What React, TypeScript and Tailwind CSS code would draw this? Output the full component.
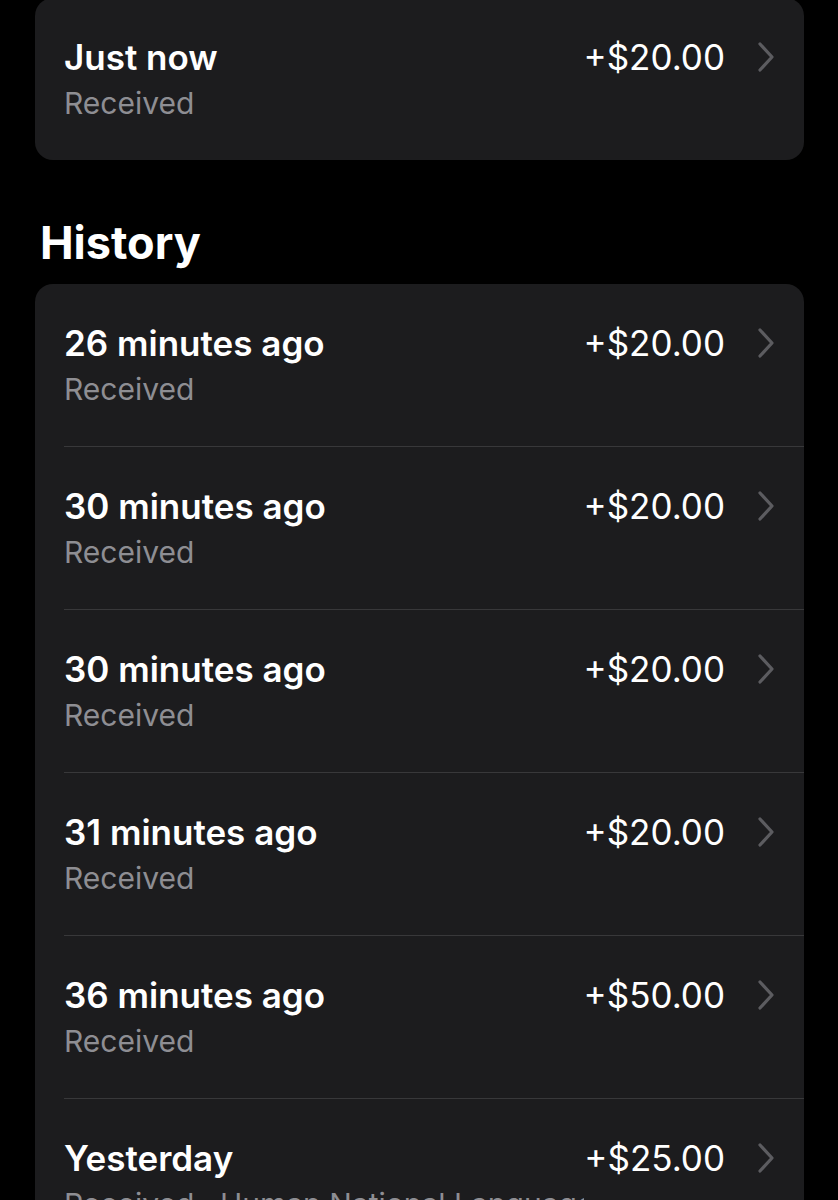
import React from "react";

type Tx = { when: string; amount: string; note: string };

const history: Tx[] = [
  { when: "26 minutes ago", amount: "+$20.00", note: "Received" },
  { when: "30 minutes ago", amount: "+$20.00", note: "Received" },
  { when: "30 minutes ago", amount: "+$20.00", note: "Received" },
  { when: "31 minutes ago", amount: "+$20.00", note: "Received" },
  { when: "36 minutes ago", amount: "+$50.00", note: "Received" },
  { when: "Yesterday", amount: "+$25.00", note: "Received · Human National Language & Dance" },
];

function Chevron() {
  return (
    <svg width="18" height="32" viewBox="0 0 18 32" fill="none" className="shrink-0">
      <path d="M3 3 L15 16 L3 29" stroke="#5c5c60" strokeWidth="3.2" strokeLinecap="round" strokeLinejoin="round" />
    </svg>
  );
}

function Row({ tx, last }: { tx: Tx; last?: boolean }) {
  return (
    <div className="pl-[29px]">
      <div className={`flex items-start pr-[29px] py-[35px] ${last ? "" : "border-b border-[#38383a]"}`}>
        <div className="flex-1 min-w-0">
          <div className="text-[35px] leading-[48px] font-semibold text-white">{tx.when}</div>
          <div className="text-[30px] leading-[44px] text-[#8e8e93] whitespace-nowrap overflow-hidden">{tx.note}</div>
        </div>
        <div className="flex items-center h-[48px]">
          <span className="text-[35px] text-white">{tx.amount}</span>
          <span className="ml-[32px]"><Chevron /></span>
        </div>
      </div>
    </div>
  );
}

export default function App() {
  return (
    <div className="h-[1200px] overflow-hidden bg-black pl-[35px] pr-[34px] font-['Inter',sans-serif]">
      {/* Latest */}
      <div className="-mt-[2px] rounded-[18px] bg-[#1c1c1e]">
        <Row tx={{ when: "Just now", amount: "+$20.00", note: "Received" }} last />
      </div>

      {/* History */}
      <h2 className="mt-[56px] mb-[14px] pl-[5px] text-[45px] leading-[54px] font-bold text-white">History</h2>
      <div className="rounded-[18px] bg-[#1c1c1e]">
        {history.map((tx, i) => (
          <Row key={i} tx={tx} last={i === history.length - 1} />
        ))}
      </div>
    </div>
  );
}
